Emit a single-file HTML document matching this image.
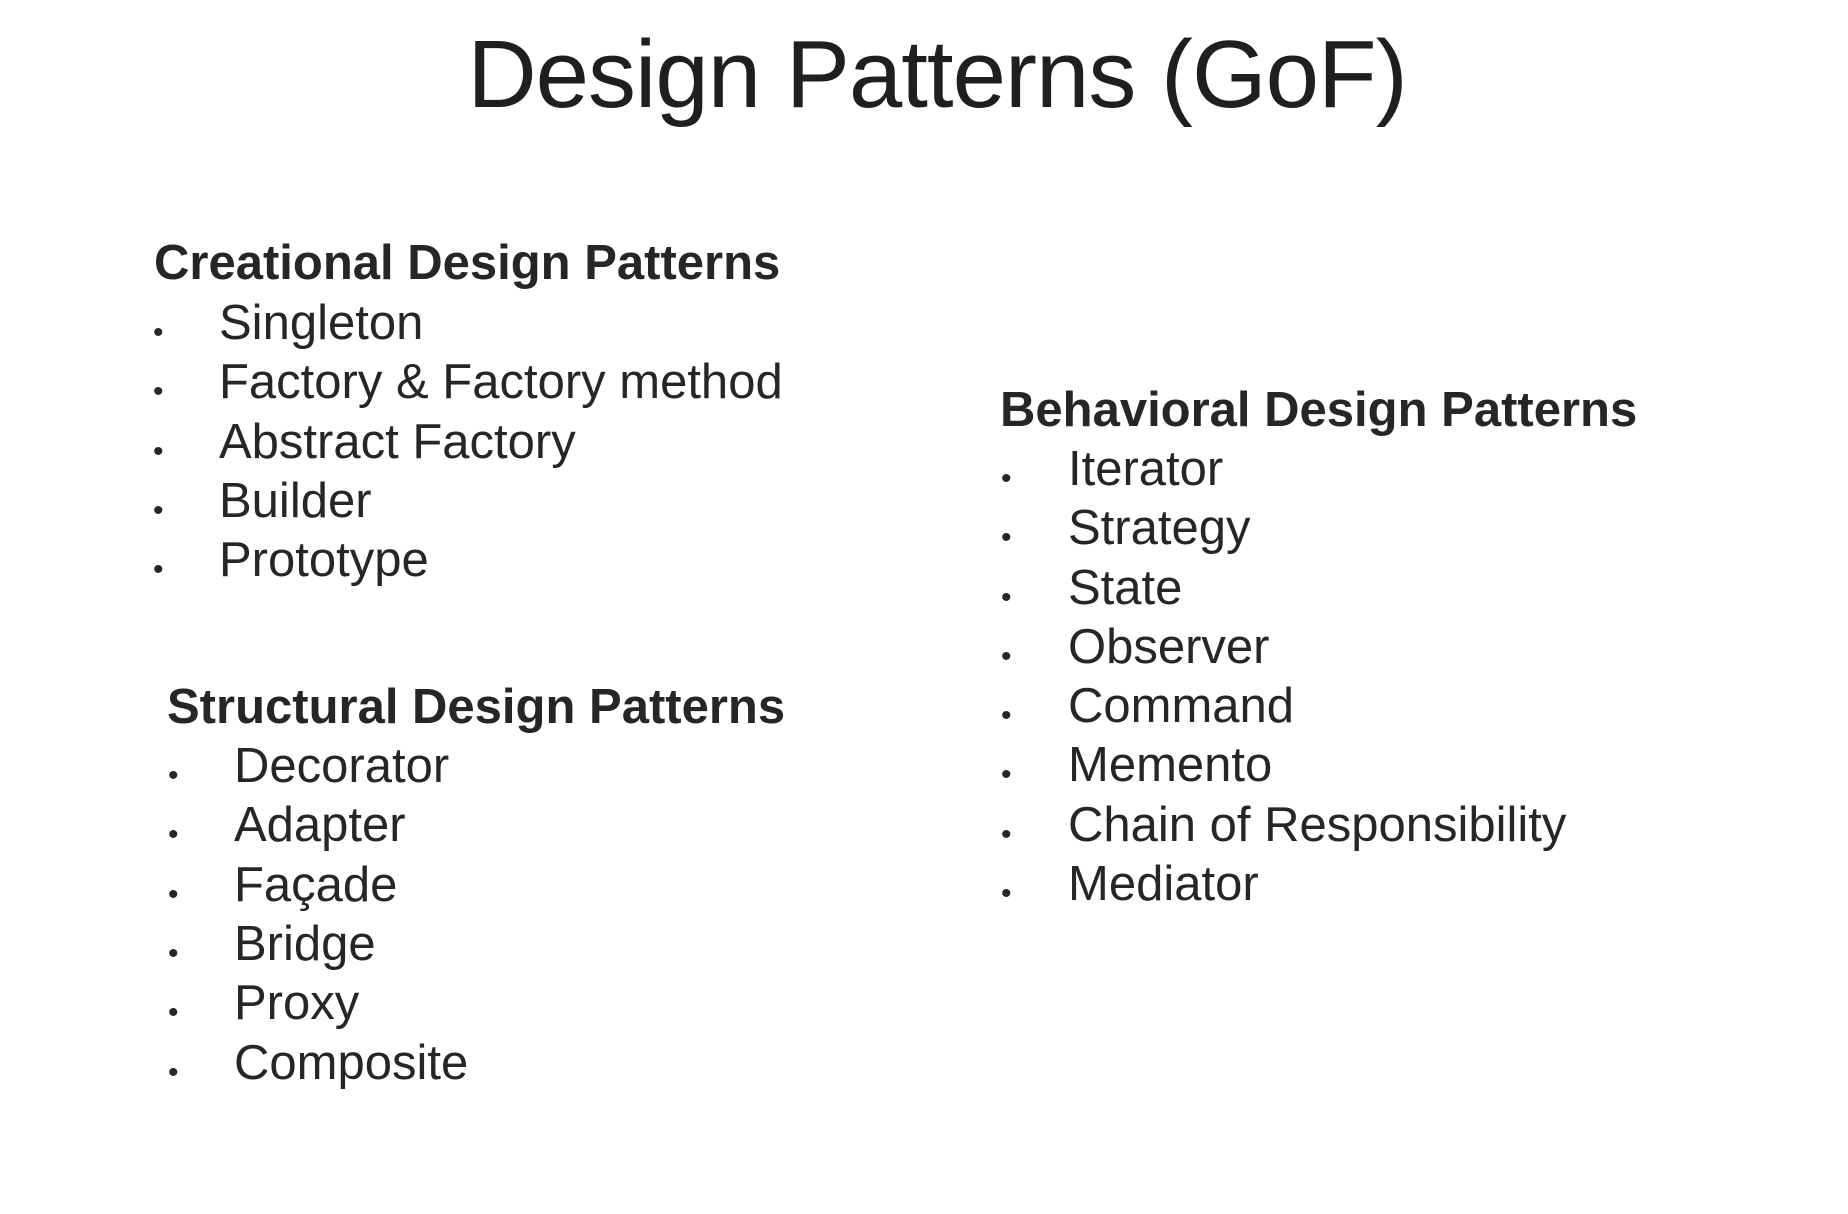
<!DOCTYPE html>
<html><head><meta charset="utf-8"><style>
body{margin:0;width:1848px;height:1214px;background:#fff;position:relative;overflow:hidden;font-family:"Liberation Sans",Arial,sans-serif;color:#262626}
div{position:absolute;line-height:1;white-space:nowrap}
.t{font-size:96px;left:0;width:1848px;text-align:center;top:27px;letter-spacing:-1px;color:#1f1f1f;padding-left:26px;box-sizing:border-box}
.h{font-size:49px;font-weight:bold}
.i{font-size:49px}
.b{font-size:30px}
</style></head><body>
<div class="t">Design Patterns (GoF)</div>

<div class="h" style="left:154px;top:239px">Creational Design Patterns</div>
<div class="b" style="left:153px;top:318px">•</div><div class="i" style="left:219px;top:299px">Singleton</div>
<div class="b" style="left:153px;top:377px">•</div><div class="i" style="left:219px;top:358px">Factory &amp; Factory method</div>
<div class="b" style="left:153px;top:437px">•</div><div class="i" style="left:219px;top:418px">Abstract Factory</div>
<div class="b" style="left:153px;top:496px">•</div><div class="i" style="left:219px;top:477px">Builder</div>
<div class="b" style="left:153px;top:555px">•</div><div class="i" style="left:219px;top:536px">Prototype</div>

<div class="h" style="left:167px;top:683px">Structural Design Patterns</div>
<div class="b" style="left:168px;top:761px">•</div><div class="i" style="left:234px;top:742px">Decorator</div>
<div class="b" style="left:168px;top:820px">•</div><div class="i" style="left:234px;top:801px">Adapter</div>
<div class="b" style="left:168px;top:880px">•</div><div class="i" style="left:234px;top:861px">Façade</div>
<div class="b" style="left:168px;top:939px">•</div><div class="i" style="left:234px;top:920px">Bridge</div>
<div class="b" style="left:168px;top:998px">•</div><div class="i" style="left:234px;top:979px">Proxy</div>
<div class="b" style="left:168px;top:1058px">•</div><div class="i" style="left:234px;top:1039px">Composite</div>

<div class="h" style="left:1000px;top:386px">Behavioral Design Patterns</div>
<div class="b" style="left:1001px;top:464px">•</div><div class="i" style="left:1068px;top:445px">Iterator</div>
<div class="b" style="left:1001px;top:523px">•</div><div class="i" style="left:1068px;top:504px">Strategy</div>
<div class="b" style="left:1001px;top:583px">•</div><div class="i" style="left:1068px;top:564px">State</div>
<div class="b" style="left:1001px;top:642px">•</div><div class="i" style="left:1068px;top:623px">Observer</div>
<div class="b" style="left:1001px;top:701px">•</div><div class="i" style="left:1068px;top:682px">Command</div>
<div class="b" style="left:1001px;top:760px">•</div><div class="i" style="left:1068px;top:741px">Memento</div>
<div class="b" style="left:1001px;top:820px">•</div><div class="i" style="left:1068px;top:801px">Chain of Responsibility</div>
<div class="b" style="left:1001px;top:879px">•</div><div class="i" style="left:1068px;top:860px">Mediator</div>
</body></html>
